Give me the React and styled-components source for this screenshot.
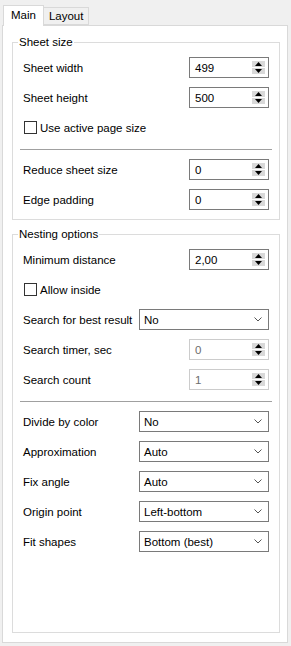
import React from 'react'
import styled, { createGlobalStyle } from 'styled-components';

const GlobalStyle = createGlobalStyle`
    html, body {
        margin: 0;
        padding: 0;
        background: #f0f0f0;
    }
    body {
        font-family: "Liberation Sans", Arial, sans-serif;
        font-size: 11.5px;
        color: #000;
    }
`

//styled Components
const Window = styled.div`
    width: 291px;
    height: 646px;
    box-sizing: border-box;
    padding: 5px 3px 3px 2px;
    display: flex;
    flex-direction: column;
`
const TabStrip = styled.div`
    height: 20px;
    display: flex;
    align-items: flex-end;
    padding-left: 1px;
`
const Tab = styled.div`
    box-sizing: border-box;
    height: ${p => (p.$active ? '21px' : '18px')};
    margin-bottom: ${p => (p.$active ? '-1px' : '0')};
    padding: 0 ${p => (p.$active ? '7px' : '5px')};
    padding-bottom: ${p => (p.$active ? '2px' : '0')};
    display: flex;
    align-items: center;
    background: ${p => (p.$active ? '#fff' : '#f0f0f0')};
    border: 1px solid #d9d9d9;
    border-bottom: ${p => (p.$active ? 'none' : '1px solid #d9d9d9')};
    border-left: ${p => (p.$active ? '1px solid #d9d9d9' : 'none')};
    position: relative;
    z-index: ${p => (p.$active ? 1 : 0)};
`
const Panel = styled.div`
    flex: 1;
    background: #fff;
    border: 1px solid #d9d9d9;
    padding: 9px 7px 9px 9px;
    display: flex;
    flex-direction: column;
    gap: 7px;
`
const Group = styled.fieldset`
    margin: 0;
    min-width: 0;
    border: 1px solid #dcdcdc;
    padding: 0 10px 9px 10px;
    display: flex;
    flex-direction: column;
    flex: ${p => (p.$grow ? 1 : 'none')};
`
const Legend = styled.legend`
    padding: 0 1px;
    margin-left: -5px;
    line-height: 14px;
`
const Row = styled.div`
    height: 21px;
    margin-top: ${p => p.$top || 9}px;
    display: flex;
    align-items: center;
    justify-content: space-between;
`
const Label = styled.span`
    white-space: nowrap;
`
const Separator = styled.div`
    height: 1px;
    background: #a0a0a0;
    margin: 11px -3px 0 -3px;
`
const SpinBox = styled.div`
    box-sizing: border-box;
    width: 80px;
    height: 21px;
    border: 1px solid ${p => (p.$disabled ? '#cccccc' : '#7a7a7a')};
    display: flex;
    align-items: center;
    justify-content: space-between;
    padding: 0 3px 0 5px;
    color: ${p => (p.$disabled ? '#6d6d6d' : '#000')};
`
const SpinButtons = styled.div`
    display: flex;
    flex-direction: column;
    gap: 1px;
`
const SpinButton = styled.div`
    width: 13px;
    height: 6px;
    background: #d9d9d9;
    display: flex;
    align-items: center;
    justify-content: center;
`
const Combo = styled.div`
    box-sizing: border-box;
    width: 130px;
    height: 21px;
    border: 1px solid #7a7a7a;
    display: flex;
    align-items: center;
    justify-content: space-between;
    padding: 0 6px 0 4px;
`
const CheckRow = styled.label`
    display: flex;
    align-items: center;
    gap: 3px;
    margin-left: 1px;
`
const CheckBox = styled.span`
    box-sizing: border-box;
    width: 13px;
    height: 13px;
    border: 1px solid #333;
    background: #fff;
`

const Arrow = ({ up }) => (
  <svg width="7" height="4" viewBox="0 0 7 4">
    <path d={up ? 'M3.5 0 L7 4 L0 4 Z' : 'M0 0 L7 0 L3.5 4 Z'} fill="#000" />
  </svg>
)

const Spin = ({ value, disabled }) => (
  <SpinBox $disabled={disabled}>
    <span>{value}</span>
    <SpinButtons>
      <SpinButton><Arrow up /></SpinButton>
      <SpinButton><Arrow /></SpinButton>
    </SpinButtons>
  </SpinBox>
)

const Select = ({ value }) => (
  <Combo>
    <span>{value}</span>
    <svg width="8" height="5" viewBox="0 0 8 5">
      <path d="M0.5 0.5 L4 4 L7.5 0.5" fill="none" stroke="#555" strokeWidth="1" />
    </svg>
  </Combo>
)

const Check = ({ label }) => (
  <CheckRow>
    <CheckBox />
    <span>{label}</span>
  </CheckRow>
)

//App Component
const App = () => {
  return (
    <Window>
      <GlobalStyle />
      <TabStrip>
        <Tab $active>Main</Tab>
        <Tab>Layout</Tab>
      </TabStrip>
      <Panel>
        <Group>
          <Legend>Sheet size</Legend>
          <Row $top={8}><Label>Sheet width</Label><Spin value="499" /></Row>
          <Row><Label>Sheet height</Label><Spin value="500" /></Row>
          <Row><Check label="Use active page size" /></Row>
          <Separator />
          <Row><Label>Reduce sheet size</Label><Spin value="0" /></Row>
          <Row><Label>Edge padding</Label><Spin value="0" /></Row>
        </Group>
        <Group $grow>
          <Legend>Nesting options</Legend>
          <Row $top={8}><Label>Minimum distance</Label><Spin value="2,00" /></Row>
          <Row><Check label="Allow inside" /></Row>
          <Row><Label>Search for best result</Label><Select value="No" /></Row>
          <Row><Label>Search timer, sec</Label><Spin value="0" disabled /></Row>
          <Row><Label>Search count</Label><Spin value="1" disabled /></Row>
          <Separator />
          <Row><Label>Divide by color</Label><Select value="No" /></Row>
          <Row><Label>Approximation</Label><Select value="Auto" /></Row>
          <Row><Label>Fix angle</Label><Select value="Auto" /></Row>
          <Row><Label>Origin point</Label><Select value="Left-bottom" /></Row>
          <Row><Label>Fit shapes</Label><Select value="Bottom (best)" /></Row>
        </Group>
      </Panel>
    </Window>
  )
}

export default App
